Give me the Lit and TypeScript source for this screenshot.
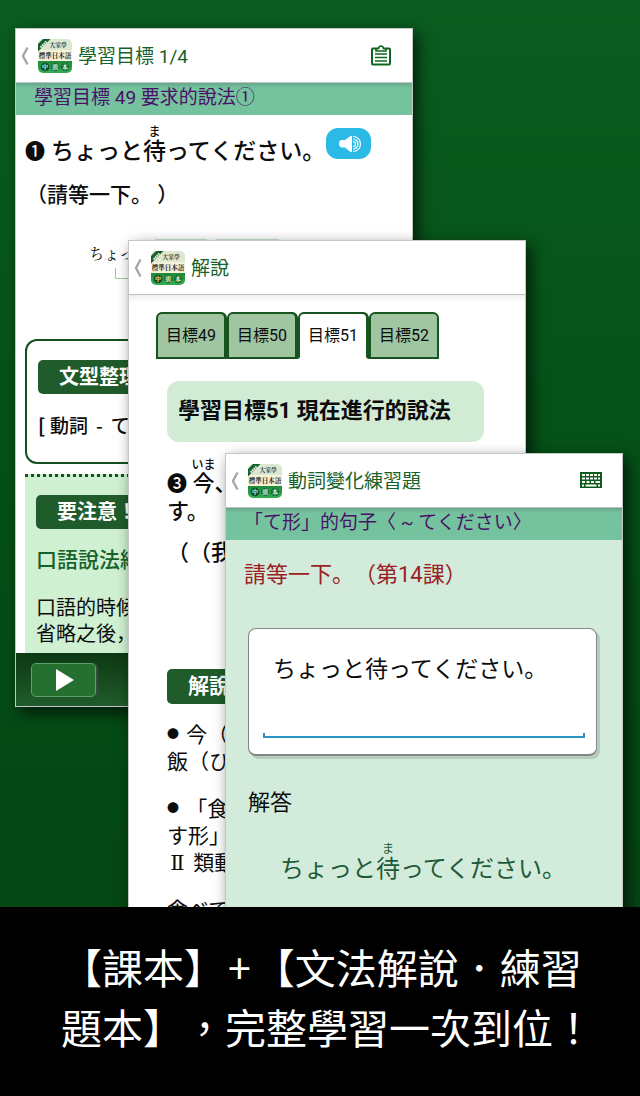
import { LitElement, html, css, svg, nothing } from "lit";
import { customElement, property, state } from "lit/decorators.js";

const JP = css`"Roboto", "Noto Sans CJK JP", sans-serif`;

@customElement("book-logo")
class BookLogo extends LitElement {
  static styles = css`
    :host { display: block; width: 34px; height: 34px; flex: none; }
    svg { display: block; }
    .mincho { font-family: "Noto Serif CJK TC", "Noto Sans CJK TC", serif; font-weight: 500; }
    .title { font-weight: 700; }
    .white { fill: #e4f3dc; }
  `;
  render() {
    return html`<svg width="34" height="34" viewBox="0 0 34 34" aria-hidden="true">
      <defs>
        <clipPath id="r"><rect width="34" height="34" rx="5" /></clipPath>
        <linearGradient id="g" x1="0" y1="0" x2="0" y2="1">
          <stop offset="0" stop-color="#1d8a3b" /><stop offset="1" stop-color="#35ad55" />
        </linearGradient>
      </defs>
      <g clip-path="url(#r)">
        <rect width="34" height="12" fill="#dbe7cf" />
        <rect y="11" width="34" height="12" fill="#f8f3d8" />
        <rect y="22" width="34" height="12" fill="url(#g)" />
        <path d="M5 0H12.500L0 12.500V5Z" fill="#17602c" />
        <path d="M2.500 8.500L8.500 2.500" stroke="#d4e8cf" stroke-width="2.200" stroke-dasharray="1.800 0.500" />
        <text class="mincho title" x="11.500" y="8" font-size="5.800" fill="#333">大家學</text>
        <text class="mincho title" x="0.800" y="19" font-size="6.500" fill="#222">標準日本語</text>
        <circle cx="7" cy="28" r="4.300" fill="#0f4a20" />
        <circle cx="17.200" cy="28" r="4.300" fill="#17702f" />
        <circle cx="27" cy="28" r="4.300" fill="#17702f" />
        <text class="mincho title white" x="4" y="30.200" font-size="6">中</text>
        <text class="mincho title white" x="14.200" y="30.200" font-size="6">級</text>
        <text class="mincho title white" x="24" y="30.200" font-size="6">本</text>
      </g>
    </svg>`;
  }
}

@customElement("app-window")
class AppWindow extends LitElement {
  @property() heading = "";
  @property() action = "";
  @property() topic = "";

  static styles = css`
    :host {
      display: flex;
      flex-direction: column;
      box-sizing: border-box;
      border: 1px solid #c4c8c4;
      background: #fff;
      box-shadow: 5px 6px 14px rgba(0, 0, 0, 0.65);
      overflow: hidden;
    }
    header {
      display: flex;
      align-items: center;
      height: 53px;
      flex: none;
      padding: 0 20px 0 5px;
      border-bottom: 1px solid #bfc3bf;
      background: #fff;
    }
    button { border: 0; background: none; padding: 0; display: block; }
    .back { width: 17px; height: 34px; }
    h1 {
      margin: 0 0 0 6px;
      padding-top: 2px;
      flex: 1;
      font: 400 19px/28px ${JP};
      color: #17622a;
    }
    .topic {
      flex: none;
      height: 26px;
      padding: 2px 18px 4px;
      font: 400 19px/26px ${JP};
      color: #4b1068;
      background: linear-gradient(#66a98a, #74c29e 5px);
    }
    .shade { height: 7px; margin-bottom: -7px; background: linear-gradient(#eee, #fff); flex: none; }
    svg { display: block; }
  `;

  private clipboard = svg`<g fill="none" stroke="#0f6420" stroke-width="2">
      <rect x="2" y="3.500" width="18" height="16" rx="1"/>
      <path d="M6 6V4L8.500 3.500Q9 1 11 1T13.500 3.500L16 4V6Z" fill="#fff" stroke-width="1.600"/>
      <path d="M5 9H17M5 12.500H17M5 16H17" stroke-width="1.600"/></g>`;

  private keyboard = svg`<rect x="0" y="2" width="22" height="16" fill="#0d5c1c"/>
      <path d="M2 5H20M2 8.500H20" stroke="#fff" stroke-width="2" stroke-dasharray="3 1"/>
      <path d="M2 12H5M6.500 12H9.500M11 12H14M15.500 12H20" stroke="#fff" stroke-width="2"/>
      <path d="M2 15.500H4M5.500 15.500H16.500M18 15.500H20" stroke="#fff" stroke-width="2"/>`;

  render() {
    return html`
      <header>
        <button class="back" aria-label="返回">
          <svg width="8" height="34" viewBox="0 0 8 34">
            <path d="M6.500 8.500L2 17L6.500 25.500" fill="none" stroke="#a6a6a6" stroke-width="2.400" />
          </svg>
        </button>
        <book-logo></book-logo>
        <h1>${this.heading}</h1>
        ${this.action
          ? html`<button aria-label=${this.action === "keyboard" ? "鍵盤" : "清單"}>
              <svg width="22" height="22" viewBox="0 0 22 22">
                ${this.action === "keyboard" ? this.keyboard : this.clipboard}
              </svg>
            </button>`
          : nothing}
      </header>
      ${this.topic ? html`<div class="topic">${this.topic}</div>` : html`<div class="shade"></div>`}
      <slot></slot>
    `;
  }
}

@customElement("app-root")
class AppRoot extends LitElement {
  @state() private goal = 51;

  static styles = css`
    :host {
      display: flex;
      flex-direction: column;
      min-height: 100vh;
      background: #000;
      font-family: ${JP};
      color: #0c0c0c;
      text-spacing-trim: space-all;
    }
    .stage {
      position: relative;
      flex: 1;
      min-height: 800px;
      overflow: hidden;
      background: linear-gradient(#0a5c1f, #055117 50%, #044614);
    }
    app-window { position: absolute; width: calc(100% - 242px); }
    .first { left: 15px; top: 28px; height: 679px; }
    .second { left: 128px; top: 240px; bottom: -40px; }
    .third { left: 225px; top: 453px; bottom: -40px; }
    h2, h3, p, ul { margin: 0; padding: 0; font-weight: inherit; }
    button { font: inherit; padding: 0; margin: 0; }
    rt { font-size: 12px; line-height: 12px; }
    svg { display: block; }
    .num { font-size: 20px; }

    .scroll { flex: 1; min-height: 0; overflow: hidden; white-space: nowrap; }
    .line { display: flex; align-items: flex-start; gap: 1px; padding-left: 9px; height: 60px; }
    .line p { font: 500 23px/34px ${JP}; padding-top: 10px; display: flex; align-items: flex-end; gap: 6px; }
    .speak {
      width: 45px;
      height: 31px;
      margin-top: 13px;
      border: 0;
      border-radius: 12px;
      background: #2bbae6;
    }
    .meaning { font: 500 21px/40px ${JP}; padding-left: 10px; }
    .diagram { height: 124px; padding-left: 73px; font-family: "Noto Serif CJK JP", "Noto Sans CJK JP", serif; font-size: 15px; }

    .chip {
      display: inline-block;
      padding: 0 21px;
      border-radius: 5px;
      background: #205c2b;
      color: #fff;
      font: 700 20px/34px ${JP};
    }
    .pattern { margin-left: 9px; border: 2px solid #155020; border-radius: 12px; padding: 19px 11px 0; height: 102px; }
    .pattern p { display: flex; gap: 8px; font: 500 19px/30px "Noto Sans CJK JP", sans-serif; padding-top: 16px; }
    .pattern .bracket { font-weight: 700; width: 4px; }
    .notice { margin: 10px 0 0 9px; border-top: 3px dotted #155020; background: #d0f0d2; padding: 18px 11px 0; height: 200px; }
    .notice h3 { font: 500 21px/30px ${JP}; color: #17622a; padding: 16px 0 20px; }
    .notice p { font: 400 20px/26px ${JP}; }
    .player { flex: none; height: 53px; display: flex; align-items: center; padding-left: 15px; background: linear-gradient(#0d3813, #205c2b); }
    .play {
      width: 65px;
      height: 34px;
      display: grid;
      place-items: center;
      border: 1px solid #58a565;
      border-radius: 5px;
      background: #25702f;
      box-shadow: 2px 0 0 #3b4a3c;
    }

    .tabs { display: flex; gap: 1px; padding: 17px 0 0 27px; }
    .tab {
      width: 70px;
      height: 47px;
      border: 2px solid #17541f;
      border-radius: 6px 6px 0 0;
      background: #9fc5a1;
      box-shadow: 1px 0 0 #17541f;
      font: 400 16px/40px ${JP};
      color: #0c0c0c;
    }
    .tab:last-child { box-shadow: none; }
    .tab[aria-selected="true"] { background: #fff; border-bottom-color: transparent; }
    .goal {
      margin: 22px 41px 0 38px;
      padding: 0 11px;
      border-radius: 12px;
      background: #d1ebd5;
      font: 700 22px/59px ${JP};
      height: 61px;
    }
    .lesson { padding-left: 38px; }
    .example { font: 500 22px/27px ${JP}; padding-top: 28px; }
    .sense { font: 500 22px/30px ${JP}; padding: 13px 0 101px; }
    .lesson .chip { font-size: 21px; line-height: 35px; }
    .lesson ul { list-style: none; padding-top: 18px; display: flex; flex-direction: column; gap: 20px; font: 400 21px/27px ${JP}; }
    .dot { font-size: 12px; line-height: 12px; vertical-align: 3px; padding-right: 2px; }
    .roman { font-family: "DejaVu Serif", serif; line-height: 20px; display: inline-block; width: 21px; text-align: center; }

    .drill { flex: 1; background: #d2ebdb; padding: 19px 25px 0 22px; }
    .question { font: 400 22px/32px ${JP}; color: #9c2023; margin-left: -4px; }
    .card {
      margin-top: 37px;
      box-sizing: border-box;
      height: 128px;
      padding: 20px 11px 17px 14px;
      border: 1px solid #858585;
      border-bottom-width: 2px;
      border-radius: 8px;
      background: #fff;
      box-shadow: 3px 3px 0 #b5cbbe;
    }
    .field {
      display: block;
      box-sizing: border-box;
      width: 100%;
      height: 89px;
      padding: 5px 10px;
      border: 0;
      resize: none;
      overflow: hidden;
      outline: 0;
      color: #0c0c0c;
      font: 400 23px/32px ${JP};
      background:
        linear-gradient(#2a94c6, #2a94c6) bottom / 100% 2px no-repeat,
        linear-gradient(#2a94c6, #2a94c6) left bottom / 2px 5px no-repeat,
        linear-gradient(#2a94c6, #2a94c6) right bottom / 2px 5px no-repeat;
    }
    .label { display: block; font: 400 22px/32px ${JP}; padding-top: 31px; }
    .answer { font: 400 24px/32px ${JP}; color: #1d5a38; padding: 34px 0 0 32px; white-space: nowrap; }

    .caption { padding: 29px 40px 40px 61px; background: #000; color: #fff; font: 400 41px/60px "Noto Sans CJK TC", sans-serif; }
    .caption p { margin: 0; }
    .plus { padding: 0 3px; }
  `;

  private furigana = html`ちょっと<ruby>待<rt>ま</rt></ruby>ってください。`;

  render() {
    return html`
      <main class="stage">
        <app-window class="first" heading="學習目標 1/4" action="clipboard" topic="學習目標 49 要求的說法①">
          <div class="scroll">
            <div class="line">
              <p><span class="num">❶</span><span>${this.furigana}</span></p>
              <button class="speak" aria-label="播放發音">
                <svg width="45" height="31" viewBox="0 0 45 31">
                  <path d="M14 13Q14 12 15.500 12H19L24.500 8H26V24H24.500L19 19.500H15.500Q13 19 13 15.500Q13 13 14 13Z" fill="#fff" />
                  <path d="M27 8.500A7.500 7.500 0 0 1 27 23.500M27 11A5 5 0 0 1 27 21M27 13.500A2.500 2.500 0 0 1 27 18.500" fill="none" stroke="#fff" stroke-width="1.200" />
                </svg>
              </button>
            </div>
            <p class="meaning">（請等一下。 ）</p>
            <div class="diagram">
              <svg width="240" height="80" viewBox="0 0 240 80">
                <path d="M66 24.500H118M127 24.500H190" stroke="#c5e6cc" />
                <path d="M26.500 53V63.500H200" fill="none" stroke="#93cda2" />
                <text x="0" y="44">ちょっと</text>
              </svg>
            </div>
            <section class="pattern">
              <h3 class="chip">文型整理</h3>
              <p><span class="bracket">[</span><span>動詞</span><span>-</span><span>て形</span><span>]</span></p>
            </section>
            <section class="notice">
              <h2 class="chip">要注意！</h2>
              <h3>口語說法縮略</h3>
              <p>口語的時候<br />省略之後，</p>
            </section>
          </div>
          <div class="player">
            <button class="play" aria-label="播放">
              <svg width="20" height="24" viewBox="0 0 20 24"><path d="M2 1L20 12L2 23Z" fill="#fff" /></svg>
            </button>
          </div>
        </app-window>

        <app-window class="second" heading="解說">
          <div class="tabs" role="tablist">
            ${[49, 50, 51, 52].map(
              (n) => html`<button class="tab" role="tab" aria-selected=${n === this.goal ? "true" : "false"}
                @click=${() => (this.goal = n)}>目標${n}</button>`
            )}
          </div>
          <h2 class="goal">學習目標51 現在進行的說法</h2>
          <div class="scroll lesson">
            <p class="example"><span class="num">❸</span> <ruby>今<rt>いま</rt></ruby>、<br />す。</p>
            <p class="sense">（（我</p>
            <h3 class="chip">解說</h3>
            <ul>
              <li><span class="dot">●</span> 今（<br />飯（ひ</li>
              <li><span class="dot">●</span> 「食<br />す形」<br /><span class="roman">Ⅱ</span> 類動</li>
              <li>食べて</li>
            </ul>
          </div>
        </app-window>

        <app-window class="third" heading="動詞變化練習題" action="keyboard" topic="「て形」的句子〈 ~ てください〉">
          <div class="drill">
            <p class="question">請等一下。（第14課）</p>
            <div class="card">
              <textarea class="field" id="reply" aria-label="作答" spellcheck="false" .value=${"ちょっと待ってください。"}></textarea>
            </div>
            <label class="label" for="reply">解答</label>
            <p class="answer">${this.furigana}</p>
          </div>
        </app-window>
      </main>
      <footer class="caption">
        <p>【課本】<span class="plus">+</span>【文法解說．練習題本】，完整學習一次到位！</p>
      </footer>
    `;
  }
}
